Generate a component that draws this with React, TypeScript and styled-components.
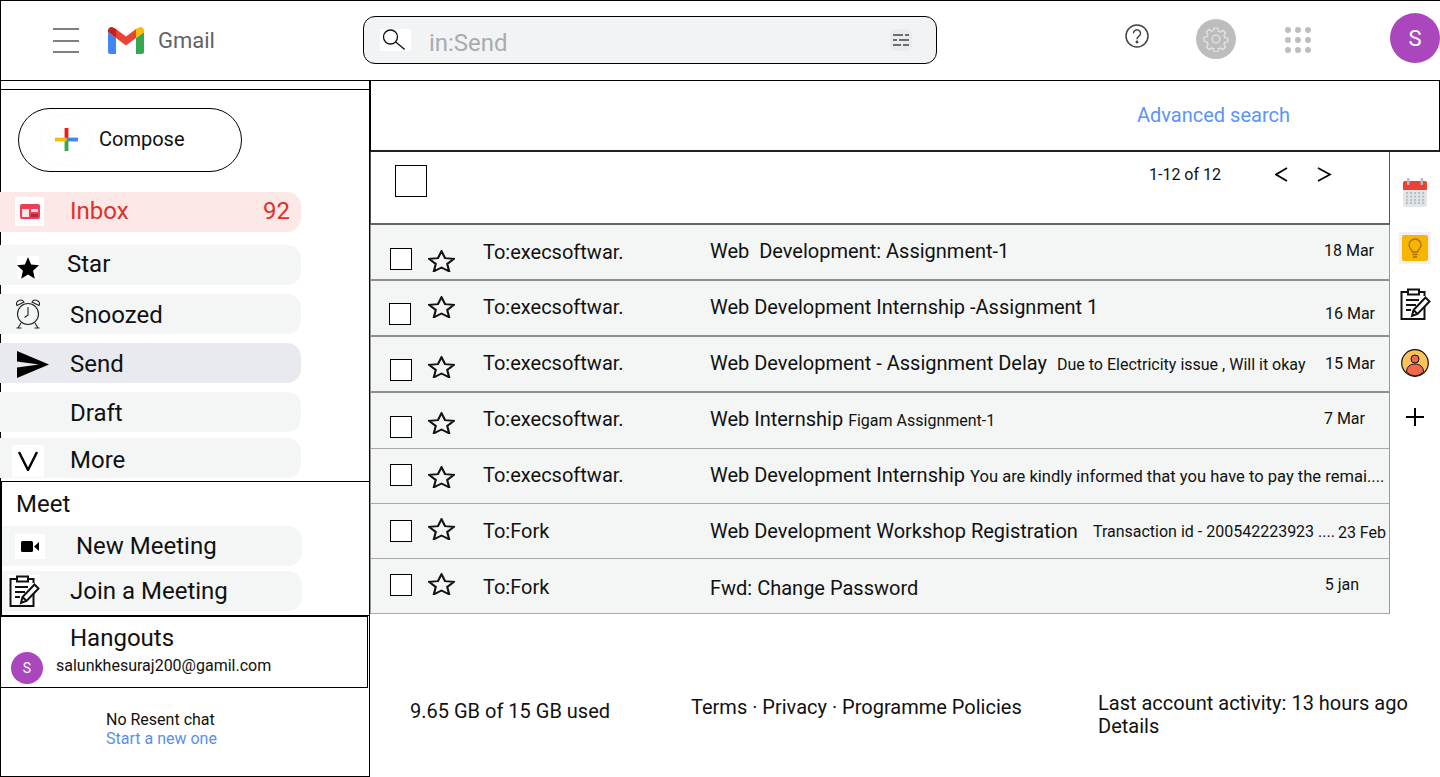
import React from 'react';
import styled, { createGlobalStyle } from 'styled-components';

const GlobalStyle = createGlobalStyle`
    html, body {
        margin: 0;
        padding: 0;
        background: #fff;
        font-family: Roboto, "Liberation Sans", sans-serif;
        color: #111;
    }
    * {
        box-sizing: border-box;
    }
`;

const Page = styled.div`
    width: 1440px;
    height: 777px;
    overflow: hidden;
    display: flex;
    flex-direction: column;
`;

/* ---------- top bar ---------- */

const Header = styled.header`
    height: 81px;
    flex: none;
    display: flex;
    align-items: flex-start;
    border: 1px solid #000;
    border-right: 0;
`;

const MenuIcon = styled.div`
    width: 26px;
    height: 25px;
    margin: 27px 0 0 52px;
    display: flex;
    flex-direction: column;
    justify-content: space-between;
    & > span {
        height: 2px;
        background: #808080;
    }
`;

const Logo = styled.svg`
    width: 36px;
    height: 27px;
    margin: 26px 0 0 29px;
`;

const Wordmark = styled.span`
    margin: 25px 0 0 14px;
    font-size: 22px;
    line-height: 29px;
    color: #5f6368;
`;

const SearchBox = styled.div`
    width: 574px;
    height: 48px;
    margin: 15px 0 0 148px;
    display: flex;
    align-items: center;
    padding: 0 24px 0 16px;
    background: #f1f3f4;
    border: 1px solid #000;
    border-radius: 12px;
`;

const SearchPatch = styled.div`
    width: 31px;
    height: 22px;
    background: #fff;
    display: flex;
    align-items: center;
    padding-left: 1px;
`;

const SearchText = styled.span`
    flex: 1;
    margin-left: 18px;
    padding-top: 6px;
    font-size: 24px;
    color: #a9abae;
`;

const FilterPatch = styled.div`
    width: 22px;
    height: 22px;
    border-radius: 6px;
    background: #e9ebec;
    display: flex;
    align-items: center;
    justify-content: center;
`;

const HelpSlot = styled.div`
    margin: 23px 0 0 188px;
    display: flex;
`;

const GearCircle = styled.div`
    width: 40px;
    height: 40px;
    margin: 18px 0 0 47px;
    border-radius: 50%;
    background: #bdbdbd;
    display: flex;
    align-items: center;
    justify-content: center;
`;

const DotGrid = styled.div`
    width: 26px;
    height: 26px;
    margin: 26px 0 0 49px;
    display: grid;
    grid-template-columns: repeat(3, 6px);
    justify-content: space-between;
    align-content: space-between;
    & > span {
        width: 6px;
        height: 6px;
        border-radius: 50%;
        background: #bdbdc2;
    }
`;

const Avatar = styled.div<{ $size: number; $font: number }>`
    width: ${(p) => p.$size}px;
    height: ${(p) => p.$size}px;
    flex: none;
    border-radius: 50%;
    background: #ab47bc;
    color: #fff;
    font-size: ${(p) => p.$font}px;
    display: flex;
    align-items: center;
    justify-content: center;
`;

const HeaderAvatar = styled(Avatar)`
    margin: 12px 0 0 79px;
`;

/* ---------- body ---------- */

const Body = styled.div`
    flex: 1;
    display: flex;
    min-height: 0;
`;

const Sidebar = styled.aside`
    width: 370px;
    flex: none;
    display: flex;
    flex-direction: column;
    border-right: 1px solid #000;
    border-bottom: 1px solid #000;
    border-left: 1px solid #000;
`;

const SideTopBand = styled.div`
    height: 9px;
    flex: none;
    border-bottom: 1px solid #000;
`;

const Compose = styled.div`
    width: 224px;
    height: 64px;
    margin: 18px 0 0 17px;
    display: flex;
    align-items: center;
    padding-left: 21px;
    gap: 7px;
    border: 1px solid #000;
    border-radius: 32px;
    font-size: 20px;
    line-height: 24px;
`;

const ComposeHalo = styled.div`
    width: 52px;
    height: 52px;
    padding-bottom: 2px;
    border: 1px solid #fafbfc;
    border-radius: 50%;
    display: flex;
    align-items: center;
    justify-content: center;
`;

const ComposeLabel = styled.span`
    padding-bottom: 2px;
`;

const NavItem = styled.div<{ $top: number; $bg: string; $color?: string; $textLeft: number; $shift?: number }>`
    width: 301px;
    height: 40px;
    flex: none;
    margin: ${(p) => p.$top}px 0 0 -1px;
    position: relative;
    display: flex;
    align-items: center;
    padding-left: ${(p) => p.$textLeft}px;
    padding-right: 11px;
    padding-top: ${(p) => Math.max(p.$shift ?? 0, 0) * 2}px;
    padding-bottom: ${(p) => Math.max(-(p.$shift ?? 0), 0) * 2}px;
    background: ${(p) => p.$bg};
    color: ${(p) => p.$color ?? '#111'};
    border-radius: 0 14px 14px 0;
    font-size: 24px;
    line-height: 28px;
`;

const NavIcon = styled.span<{ $left: number; $top: number; $w: number; $h: number; $patch?: boolean }>`
    position: absolute;
    left: ${(p) => p.$left}px;
    top: ${(p) => p.$top}px;
    width: ${(p) => p.$w}px;
    height: ${(p) => p.$h}px;
    display: flex;
    align-items: center;
    justify-content: center;
    background: ${(p) => (p.$patch ? '#fff' : 'transparent')};
`;

const Count = styled.span`
    margin-left: auto;
`;

const MeetBox = styled.section`
    height: 135px;
    flex: none;
    margin: 3px -1px 0 -1px;
    border: 1px solid #000;
    border-left-width: 2px;
    display: flex;
    flex-direction: column;
`;

const SectionTitle = styled.div`
    margin: 8px 0 0 14px;
    font-size: 24px;
    line-height: 28px;
`;

const MeetItem = styled(NavItem)`
    margin-left: 0;
    width: 300px;
`;

const HangoutsBox = styled.section`
    height: 72px;
    width: 368px;
    flex: none;
    margin: 0 0 0 -1px;
    border: 1px solid #000;
    padding: 7px 0 0 10px;
`;

const HangoutsTitle = styled.div`
    margin-left: 59px;
    font-size: 24px;
    line-height: 28px;
`;

const HangoutsUser = styled.div`
    display: flex;
    align-items: flex-start;
    gap: 13px;
    font-size: 16px;
    line-height: 22px;
`;

const HangoutsMail = styled.span`
    margin-top: 3px;
`;

const NoChat = styled.div`
    margin: 22px 0 0 105px;
    font-size: 16px;
    line-height: 19px;
`;

const LinkText = styled.span`
    display: block;
    color: #5b8fe6;
`;

/* ---------- main column ---------- */

const Main = styled.main`
    flex: 1;
    display: flex;
    flex-direction: column;
    min-width: 0;
`;

const AdvancedBar = styled.div`
    height: 71px;
    flex: none;
    padding: 22px 149px 0 0;
    text-align: right;
    border-right: 1px solid #000;
    border-bottom: 2px solid #222;
    border-left: 1px solid #000;
    font-size: 20px;
    line-height: 24px;
    color: #5b94f5;
`;

const Content = styled.div`
    flex: none;
    display: flex;
`;

const List = styled.div`
    width: 1020px;
    flex: none;
`;

const Toolbar = styled.div`
    height: 73px;
    display: flex;
    align-items: flex-start;
    border-right: 1px solid #555;
    border-bottom: 2px solid #666;
    border-left: 1px solid #555;
`;

const MasterCheck = styled.div`
    width: 32px;
    height: 32px;
    margin: 13px 0 0 24px;
    border: 1px solid #000;
`;

const PageCount = styled.span`
    margin: 13px 0 0 722px;
    font-size: 16px;
    line-height: 19px;
`;

const Pager = styled.div`
    margin: 15px 0 0 54px;
    display: flex;
    gap: 27px;
`;

const Row = styled.div<{ $h: number; $thin?: boolean }>`
    height: ${(p) => p.$h}px;
    display: flex;
    align-items: flex-start;
    background: #f4f6f5;
    border-right: 1px solid #999;
    border-bottom: ${(p) => (p.$thin ? '1px solid #a8a8a8' : '2px solid #8e8e8e')};
    border-left: 1px solid #999;
`;

const CheckSlot = styled.div`
    width: 57px;
    flex: none;
`;

const RowCheck = styled.div<{ $top: number; $left: number }>`
    width: 22px;
    height: 22px;
    margin: ${(p) => p.$top}px 0 0 ${(p) => p.$left}px;
    background: #fff;
    border: 1px solid #000;
`;

const StarCell = styled.div<{ $top: number }>`
    width: 27px;
    height: 22px;
    flex: none;
    margin-top: ${(p) => p.$top}px;
    display: flex;
`;

const Sender = styled.span<{ $top: number }>`
    width: 227px;
    flex: none;
    margin: ${(p) => p.$top}px 0 0 28px;
    font-size: 20px;
    line-height: 24px;
`;

const Subject = styled.span<{ $top: number }>`
    flex: none;
    margin-top: ${(p) => p.$top}px;
    font-size: 20px;
    line-height: 24px;
    white-space: pre;
`;

const Snippet = styled.span<{ $top: number; $gap: number; $size: number }>`
    flex: none;
    margin: ${(p) => p.$top}px 0 0 ${(p) => p.$gap}px;
    font-size: ${(p) => p.$size}px;
    line-height: 20px;
    white-space: pre;
`;

const DateText = styled.span<{ $top: number; $right: number }>`
    margin: ${(p) => p.$top}px ${(p) => p.$right}px 0 auto;
    flex: none;
    font-size: 16px;
    line-height: 20px;
`;

const Rail = styled.div`
    flex: 1;
    display: flex;
    flex-direction: column;
    align-items: center;
    padding-top: 26px;
`;

const RailItem = styled.div<{ $top: number; $left: number }>`
    margin: ${(p) => p.$top}px 0 0 ${(p) => p.$left}px;
    display: flex;
`;

const KeepTile = styled.div`
    width: 32px;
    height: 32px;
    padding: 3px;
    background: #f1f1f1;
    display: flex;
    & > div {
        flex: 1;
        background: #f7b500;
        border-radius: 2px;
        display: flex;
        align-items: center;
        justify-content: center;
    }
`;

const Footer = styled.footer`
    flex: 1;
    display: flex;
    align-items: flex-start;
    font-size: 20px;
    line-height: 23px;
`;

const FooterUsage = styled.div`
    margin: 86px 0 0 40px;
    width: 281px;
    flex: none;
`;

const FooterLinks = styled.div`
    margin: 82px 0 0 0;
    width: 407px;
    flex: none;
`;

const FooterActivity = styled.div`
    margin: 78px 0 0 0;
`;

/* ---------- drawn icons ---------- */

const GmailLogo = () => (
    <Logo viewBox="0 0 36 27">
        <path d="M0 5v19.500A2.500 2.500 0 0 0 2.500 27H8V11z" fill="#4285f4" />
        <path d="M28 27h5.500a2.500 2.500 0 0 0 2.500-2.500V5l-8 6z" fill="#34a853" />
        <path d="M28 2v9l8-6V3.500C36 .5 32.600-1 30.200.8z" fill="#fbbc04" />
        <path d="M8 11V2l10 7.500L28 2v9l-10 7.500z" fill="#ea4335" />
        <path d="M0 3.500V5l8 6V2L5.800.8C3.400-1 0 .5 0 3.500z" fill="#c5221f" />
    </Logo>
);

const SearchIcon = () => (
    <svg width="26" height="24" viewBox="0 0 26 24" fill="none" stroke="#111" strokeWidth="1.300">
        <circle cx="9.500" cy="9" r="7" />
        <path d="M14.700 14l9 7.500" />
    </svg>
);

const FilterIcon = () => (
    <svg width="16" height="14" viewBox="0 0 16 14" fill="none" stroke="#6b6f73" strokeWidth="2">
        <path d="M0 2h10M12 2h4M0 7h4M6 7h10M0 12h8M10 12h6" />
    </svg>
);

const HelpIcon = () => (
    <svg width="24" height="24" viewBox="0 0 24 24" fill="none" stroke="#444" strokeWidth="1.500">
        <circle cx="12" cy="12" r="11" />
        <path d="M8.500 9.300a3.500 3.500 0 1 1 5.500 2.800c-1.300.9-2 1.500-2 3.100" />
        <circle cx="12" cy="18" r=".7" fill="#444" />
    </svg>
);

const GearIcon = () => (
    <svg width="26" height="26" viewBox="0 0 24 24" fill="none" stroke="#e4e4e4" strokeWidth="1.200" strokeLinejoin="round">
        <path d="M10.300 2h3.400l.5 2.800 1.900.8 2.400-1.600 2.400 2.400-1.600 2.400.8 1.900 2.800.5v3.400l-2.800.5-.8 1.900 1.600 2.400-2.400 2.400-2.400-1.600-1.900.8-.5 2.800h-3.400l-.5-2.800-1.900-.8-2.400 1.600-2.400-2.400 1.600-2.400-.8-1.900L1 13.700v-3.400l2.800-.5.8-1.900L3 5.500l2.400-2.400 2.400 1.600 1.900-.8z" />
        <circle cx="12" cy="12" r="3.500" />
    </svg>
);

const ComposePlus = () => (
    <svg width="23" height="23" viewBox="0 0 24 24">
        <rect x="10" y="0" width="4" height="12" fill="#ea1c1c" />
        <rect x="12" y="10" width="12" height="4" fill="#4285f4" />
        <rect x="10" y="12" width="4" height="12" fill="#34a853" />
        <rect x="0" y="10" width="12" height="4" fill="#fbbc04" />
    </svg>
);

const InboxIcon = () => (
    <svg width="20" height="15" viewBox="0 0 20 15">
        <path d="M2 0h16a2 2 0 0 1 2 2v11a2 2 0 0 1-2 2H2a2 2 0 0 1-2-2V2a2 2 0 0 1 2-2z" fill="#f23b54" />
        <rect x="2" y="5" width="7" height="8" fill="#fde4e6" />
        <rect x="11" y="5" width="7" height="3" fill="#fde4e6" />
        <rect x="11" y="10" width="7" height="3" fill="#b8243a" />
    </svg>
);

const StarIcon = () => (
    <svg width="27" height="22" viewBox="1 0.5 25 23.500" preserveAspectRatio="none" fill="none" stroke="#111" strokeWidth="2">
        <path d="M13.500 1.800l3.300 7.400 8.100.8-6.100 5.400 1.800 7.900-7.100-4.100-7.100 4.100 1.800-7.900L2.100 10l8.100-.8z" />
    </svg>
);

const SolidStar = () => (
    <svg width="22" height="22" viewBox="2 2 20 19.300" preserveAspectRatio="none" fill="#000">
        <path d="M12 17.300l6.200 3.700-1.600-7L22 9.200l-7.200-.6L12 2 9.200 8.600 2 9.200l5.400 4.800-1.600 7z" />
    </svg>
);

const AlarmIcon = () => (
    <svg width="26" height="30" viewBox="0 0 26 30" fill="none" stroke="#222" strokeWidth="1.100">
        <circle cx="13" cy="15" r="10.500" />
        <path d="M13 8v8l-3.500 2.500" />
        <path d="M2 6.500a4 3.500 0 0 1 7-3.500zM24 6.500a4 3.500 0 0 0-7-3.500z" />
        <path d="M6 24l-3 5M20 24l3 5M1.500 29h5M19.500 29h5" />
    </svg>
);

const SendIcon = () => (
    <svg width="32" height="27" viewBox="0 0 32 27">
        <path d="M0 0l32 13.500L0 27v-10.500l22-3-22-3z" fill="#000" />
    </svg>
);

const ChevronDown = () => (
    <svg width="20" height="20" viewBox="0 0 20 20" fill="none" stroke="#000" strokeWidth="2.400">
        <path d="M1 1l9 18 9-18" />
    </svg>
);

const VideoIcon = () => (
    <svg width="18" height="11" viewBox="0 0 18 11">
        <rect width="12" height="11" rx="1.500" fill="#000" />
        <path d="M13 5.500L18 1v9z" fill="#000" />
    </svg>
);

const NotesIcon = () => (
    <svg width="32" height="32" viewBox="0 0 32 32" fill="none" stroke="#111" strokeWidth="2">
        <path d="M9 4H2.500v27h23V18" />
        <path d="M20 4h5.500v4" />
        <rect x="9" y="1.500" width="11" height="5" fill="#fff" />
        <path d="M7 12h13M7 17h10M7 22h5" />
        <path d="M13 28l1.500-6L26.500 9.500l4 4L18.500 26z" fill="#fff" />
        <path d="M14.500 22l4 4" />
    </svg>
);

const CalendarIcon = () => (
    <svg width="24" height="29" viewBox="0 0 24 29">
        <rect y="3" width="24" height="26" rx="2" fill="#e3e6e8" />
        <path d="M2 3h20a2 2 0 0 1 2 2v7H0V5a2 2 0 0 1 2-2z" fill="#ea4335" />
        <rect x="4" y="0" width="2.500" height="7" rx="1" fill="#b8bcc0" />
        <rect x="17.500" y="0" width="2.500" height="7" rx="1" fill="#b8bcc0" />
        <g fill="#bcc1c6">
            {[14, 17.5, 21, 24].map((y) =>
                [3, 7, 11, 15, 19].map((x) => <rect key={`${x}-${y}`} x={x} y={y} width="2.200" height="2.200" />),
            )}
        </g>
    </svg>
);

const BulbIcon = () => (
    <svg width="14" height="20" viewBox="0 0 14 20" fill="none" stroke="#a86e00" strokeWidth="1.300">
        <path d="M4.500 14c0-2-3.500-3.500-3.500-7a6 6 0 0 1 12 0c0 3.500-3.500 5-3.500 7z" />
        <path d="M4.500 16.500h5M5 19h4" />
    </svg>
);

const PersonIcon = () => (
    <svg width="28" height="28" viewBox="0 0 28 28">
        <circle cx="14" cy="14" r="13.300" fill="#fdc15a" stroke="#111" strokeWidth="1.200" />
        <circle cx="14" cy="10" r="4" fill="#ee6a4d" stroke="#111" />
        <path d="M5.500 23c0-5 3.500-8 8.500-8s8.500 3 8.500 8A13 13 0 0 1 14 27a13 13 0 0 1-8.500-4z" fill="#ee6a4d" stroke="#111" />
    </svg>
);

const PlusIcon = () => (
    <svg width="18" height="18" viewBox="0 0 18 18" stroke="#000" strokeWidth="2">
        <path d="M9 0v18M0 9h18" />
    </svg>
);

const PagerArrow = ({ right }: { right?: boolean }) => (
    <svg width="15" height="15" viewBox="0 0 15 15" fill="none" stroke="#000" strokeWidth="1.700">
        <path d={right ? 'M1 1l12 6.500L1 14' : 'M12 1L1 7.500 12 14'} />
    </svg>
);

/* ---------- data ---------- */

type Mail = {
    h: number;
    thin?: boolean;
    checkTop: number;
    checkLeft: number;
    starTop: number;
    senderTop: number;
    subjectTop: number;
    sender: string;
    subject: string;
    snippet?: string;
    snippetTop?: number;
    snippetGap?: number;
    snippetSize?: number;
    date?: string;
    dateTop?: number;
    dateRight?: number;
};

const mails: Mail[] = [
    { h: 56, checkTop: 23, checkLeft: 18, starTop: 25, senderTop: 15, subjectTop: 14, sender: 'To:execsoftwar.', subject: 'Web  Development: Assignment-1', date: '18 Mar', dateTop: 16, dateRight: 15 },
    { h: 56, checkTop: 22, checkLeft: 17, starTop: 15, senderTop: 14, subjectTop: 14, sender: 'To:execsoftwar.', subject: 'Web Development Internship -Assignment 1', date: '16 Mar', dateTop: 23, dateRight: 14 },
    { h: 56, checkTop: 22, checkLeft: 18, starTop: 19, senderTop: 14, subjectTop: 14, sender: 'To:execsoftwar.', subject: 'Web Development - Assignment Delay', snippet: 'Due to Electricity issue , Will it okay', snippetTop: 18, snippetGap: 10, date: '15 Mar', dateTop: 17, dateRight: 14 },
    { h: 56, thin: true, checkTop: 23, checkLeft: 18, starTop: 19, senderTop: 14, subjectTop: 14, sender: 'To:execsoftwar.', subject: 'Web Internship', snippet: 'Figam Assignment-1', snippetTop: 18, snippetGap: 5, date: '7 Mar', dateTop: 16, dateRight: 24 },
    { h: 55, thin: true, checkTop: 15, checkLeft: 18, starTop: 17, senderTop: 14, subjectTop: 14, sender: 'To:execsoftwar.', subject: 'Web Development Internship', snippet: 'You are kindly informed that you have to pay the remai....', snippetTop: 18, snippetGap: 5, snippetSize: 16.55 },
    { h: 55, thin: true, checkTop: 16, checkLeft: 18, starTop: 14, senderTop: 15, subjectTop: 15, sender: 'To:Fork', subject: 'Web Development Workshop Registration', snippet: 'Transaction id - 200542223923 ....', snippetTop: 18, snippetGap: 15, date: '23 Feb', dateTop: 19, dateRight: 3 },
    { h: 55, thin: true, checkTop: 15, checkLeft: 18, starTop: 14, senderTop: 16, subjectTop: 17, sender: 'To:Fork', subject: 'Fwd: Change Password', date: '5 jan', dateTop: 16, dateRight: 30 },
];

const App = () => (
    <Page>
        <GlobalStyle />
        <Header>
            <MenuIcon>
                <span />
                <span />
                <span />
            </MenuIcon>
            <GmailLogo />
            <Wordmark>Gmail</Wordmark>
            <SearchBox>
                <SearchPatch>
                    <SearchIcon />
                </SearchPatch>
                <SearchText>in:Send</SearchText>
                <FilterPatch>
                    <FilterIcon />
                </FilterPatch>
            </SearchBox>
            <HelpSlot>
                <HelpIcon />
            </HelpSlot>
            <GearCircle>
                <GearIcon />
            </GearCircle>
            <DotGrid>
                {Array.from({ length: 9 }).map((_, i) => (
                    <span key={i} />
                ))}
            </DotGrid>
            <HeaderAvatar $size={50} $font={22}>
                S
            </HeaderAvatar>
        </Header>
        <Body>
            <Sidebar>
                <SideTopBand />
                <Compose>
                    <ComposeHalo>
                        <ComposePlus />
                    </ComposeHalo>
                    <ComposeLabel>Compose</ComposeLabel>
                </Compose>
                <NavItem $top={20} $bg="#fce8e6" $color="#e0302a" $textLeft={70} $shift={-1}>
                    <NavIcon $left={15} $top={5} $w={29} $h={29} $patch>
                        <InboxIcon />
                    </NavIcon>
                    Inbox
                    <Count>92</Count>
                </NavItem>
                <NavItem $top={13} $bg="#f4f6f5" $textLeft={67} $shift={-1.5}>
                    <NavIcon $left={17} $top={11} $w={22} $h={23} $patch>
                        <SolidStar />
                    </NavIcon>
                    Star
                </NavItem>
                <NavItem $top={9} $bg="#f4f6f5" $textLeft={70} $shift={1}>
                    <NavIcon $left={15} $top={5} $w={26} $h={30}>
                        <AlarmIcon />
                    </NavIcon>
                    Snoozed
                </NavItem>
                <NavItem $top={9} $bg="#e9eaef" $textLeft={70} $shift={1}>
                    <NavIcon $left={17} $top={8} $w={32} $h={27}>
                        <SendIcon />
                    </NavIcon>
                    Send
                </NavItem>
                <NavItem $top={9} $bg="#f4f6f5" $textLeft={70} $shift={1}>
                    Draft
                </NavItem>
                <NavItem $top={6} $bg="#f4f6f5" $textLeft={70} $shift={2}>
                    <NavIcon $left={12} $top={7} $w={32} $h={32} $patch>
                        <ChevronDown />
                    </NavIcon>
                    More
                </NavItem>
                <MeetBox>
                    <SectionTitle>Meet</SectionTitle>
                    <MeetItem $top={8} $bg="#f4f6f5" $textLeft={74}>
                        <NavIcon $left={13} $top={8} $w={30} $h={25} $patch>
                            <VideoIcon />
                        </NavIcon>
                        New Meeting
                    </MeetItem>
                    <MeetItem $top={5} $bg="#f4f6f5" $textLeft={68}>
                        <NavIcon $left={6} $top={4} $w={32} $h={32} $patch>
                            <NotesIcon />
                        </NavIcon>
                        Join a Meeting
                    </MeetItem>
                </MeetBox>
                <HangoutsBox>
                    <HangoutsTitle>Hangouts</HangoutsTitle>
                    <HangoutsUser>
                        <Avatar $size={32} $font={14}>
                            S
                        </Avatar>
                        <HangoutsMail>salunkhesuraj200@gamil.com</HangoutsMail>
                    </HangoutsUser>
                </HangoutsBox>
                <NoChat>
                    No Resent chat
                    <LinkText>Start a new one</LinkText>
                </NoChat>
            </Sidebar>
            <Main>
                <AdvancedBar>Advanced search</AdvancedBar>
                <Content>
                    <List>
                        <Toolbar>
                            <MasterCheck />
                            <PageCount>1-12 of 12</PageCount>
                            <Pager>
                                <PagerArrow />
                                <PagerArrow right />
                            </Pager>
                        </Toolbar>
                        {mails.map((m, i) => (
                            <Row key={i} $h={m.h} $thin={m.thin}>
                                <CheckSlot>
                                    <RowCheck $top={m.checkTop} $left={m.checkLeft + 1} />
                                </CheckSlot>
                                <StarCell $top={m.starTop}>
                                    <StarIcon />
                                </StarCell>
                                <Sender $top={m.senderTop}>{m.sender}</Sender>
                                <Subject $top={m.subjectTop}>{m.subject}</Subject>
                                {m.snippet && (
                                    <Snippet $top={m.snippetTop ?? 0} $gap={m.snippetGap ?? 0} $size={m.snippetSize ?? 16}>
                                        {m.snippet}
                                    </Snippet>
                                )}
                                {m.date && (
                                    <DateText $top={m.dateTop ?? 0} $right={m.dateRight ?? 0}>
                                        {m.date}
                                    </DateText>
                                )}
                            </Row>
                        ))}
                    </List>
                    <Rail>
                        <RailItem $top={0} $left={0}>
                            <CalendarIcon />
                        </RailItem>
                        <RailItem $top={25} $left={0}>
                            <KeepTile>
                                <div>
                                    <BulbIcon />
                                </div>
                            </KeepTile>
                        </RailItem>
                        <RailItem $top={24} $left={0}>
                            <NotesIcon />
                        </RailItem>
                        <RailItem $top={29} $left={0}>
                            <PersonIcon />
                        </RailItem>
                        <RailItem $top={31} $left={-1}>
                            <PlusIcon />
                        </RailItem>
                    </Rail>
                </Content>
                <Footer>
                    <FooterUsage>9.65 GB of 15 GB used</FooterUsage>
                    <FooterLinks>Terms · Privacy · Programme Policies</FooterLinks>
                    <FooterActivity>
                        Last account activity: 13 hours ago
                        <br />
                        Details
                    </FooterActivity>
                </Footer>
            </Main>
        </Body>
    </Page>
);

export default App;
